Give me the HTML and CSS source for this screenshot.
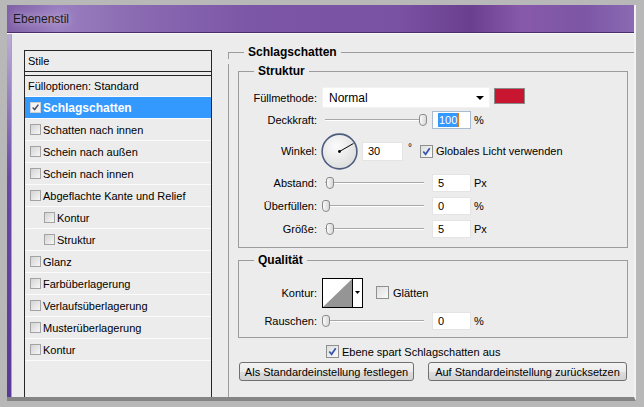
FILE: index.html
```html
<!DOCTYPE html>
<html lang="de">
<head>
  <meta charset="UTF-8">
  <meta name="viewport" content="width=device-width, initial-scale=1.0">
  <title>Ebenenstil</title>
  <link rel="stylesheet" href="styles.css">
</head>
<body>
  <div class="window">
    <div class="titlebar">Ebenenstil</div>

    <div class="dialog">
      <!-- Liste der Stile -->
      <div class="styles-list">
        <div class="list-head">Stile</div>
        <div class="list-item first">Fülloptionen: Standard</div>
        <div class="list-item selected">
          <span class="box checked"><svg viewBox="0 0 11 11"><path d="M2 5.5 L4.5 8 L9 2" /></svg></span>Schlagschatten
        </div>
        <div class="list-item"><span class="box"></span>Schatten nach innen</div>
        <div class="list-item"><span class="box"></span>Schein nach außen</div>
        <div class="list-item"><span class="box"></span>Schein nach innen</div>
        <div class="list-item"><span class="box"></span>Abgeflachte Kante und Relief</div>
        <div class="list-item sub"><span class="box"></span>Kontur</div>
        <div class="list-item sub"><span class="box"></span>Struktur</div>
        <div class="list-item"><span class="box"></span>Glanz</div>
        <div class="list-item"><span class="box"></span>Farbüberlagerung</div>
        <div class="list-item"><span class="box"></span>Verlaufsüberlagerung</div>
        <div class="list-item"><span class="box"></span>Musterüberlagerung</div>
        <div class="list-item"><span class="box"></span>Kontur</div>
      </div>

      <!-- Einstellungen Schlagschatten -->
      <div class="settings">
        <div class="group outer">
          <div class="group-title"><span>Schlagschatten</span></div>
          <div class="group-body">

            <div class="group inner">
              <div class="group-title"><span>Struktur</span></div>
              <div class="group-body struktur">
                <div class="row row-fill">
                  <label>Füllmethode:</label>
                  <div class="select">Normal<span class="arrow"></span></div>
                  <span class="swatch"></span>
                </div>
                <div class="row row-slider">
                  <label>Deckkraft:</label>
                  <div class="slider"><span class="knob" style="left: 98px"></span></div>
                  <div class="field focused"><span class="sel">100</span><span class="caret"></span></div>
                  <span class="unit">%</span>
                </div>
                <div class="row row-angle">
                  <label>Winkel:</label>
                  <svg class="dial" width="37" height="37" viewBox="0 0 37 37">
                    <defs>
                      <radialGradient id="dialfill" cx="40%" cy="35%" r="70%">
                        <stop offset="0" stop-color="#fbfbfb"/>
                        <stop offset="1" stop-color="#dcdcdc"/>
                      </radialGradient>
                    </defs>
                    <circle cx="18.5" cy="18.5" r="17.4" fill="url(#dialfill)" stroke="#4d5d7e" stroke-width="1.6"/>
                    <line x1="18.5" y1="18.5" x2="32.4" y2="10.5" stroke="#000" stroke-width="1"/>
                    <circle cx="18.5" cy="18.5" r="1.4" fill="#000"/>
                  </svg>
                  <div class="field angle">30</div>
                  <span class="deg">°</span>
                  <span class="check on"><svg viewBox="0 0 12 12"><path d="M2.5 6 L5 9 L9.5 2.5" /></svg></span>
                  <span class="check-label">Globales Licht verwenden</span>
                </div>
                <div class="row row-slider">
                  <label>Abstand:</label>
                  <div class="slider"><span class="knob" style="left: 5px"></span></div>
                  <div class="field">5</div>
                  <span class="unit">Px</span>
                </div>
                <div class="row row-slider">
                  <label>Überfüllen:</label>
                  <div class="slider"><span class="knob" style="left: 1px"></span></div>
                  <div class="field">0</div>
                  <span class="unit">%</span>
                </div>
                <div class="row row-slider">
                  <label>Größe:</label>
                  <div class="slider"><span class="knob" style="left: 5px"></span></div>
                  <div class="field">5</div>
                  <span class="unit">Px</span>
                </div>
              </div>
            </div>

            <div class="group inner quality">
              <div class="group-title"><span>Qualität</span></div>
              <div class="group-body qualitaet">
                <div class="row row-contour">
                  <label>Kontur:</label>
                  <svg class="contour" width="41" height="30" viewBox="0 0 41 30">
                    <rect x="0.5" y="0.5" width="40" height="29" fill="#fff" stroke="#000"/>
                    <polygon points="1,29 30,1 30,29" fill="#959595"/>
                    <line x1="30.5" y1="0" x2="30.5" y2="30" stroke="#000"/>
                    <polygon points="33,13 38,13 35.5,16" fill="#000"/>
                  </svg>
                  <span class="check"></span>
                  <span class="check-label">Glätten</span>
                </div>
                <div class="row row-slider">
                  <label>Rauschen:</label>
                  <div class="slider"><span class="knob" style="left: 1px"></span></div>
                  <div class="field">0</div>
                  <span class="unit">%</span>
                </div>
              </div>
            </div>

            <div class="knockout">
              <span class="check on"><svg viewBox="0 0 12 12"><path d="M2.5 6 L5 9 L9.5 2.5" /></svg></span>
              <span class="check-label">Ebene spart Schlagschatten aus</span>
            </div>

            <div class="buttons">
              <button class="btn-save">Als Standardeinstellung festlegen</button>
              <button class="btn-reset">Auf Standardeinstellung zurücksetzen</button>
            </div>

          </div>
        </div>
      </div>
    </div>
  </div>
</body>
</html>
```

FILE: styles.css
```css
html {
  background: #b8b8b8;
}
body {
  margin: 0;
  font-family: "Liberation Sans", Arial, sans-serif;
  font-size: 11px;
  color: #000;
}
.window {
  margin: 5px 0 0 7px;
  width: 627px;
  height: 392px;
  display: flex;
  flex-direction: column;
  border-right: 2px solid #f2f2f2;
  border-bottom: 4px solid #858585;
  overflow: hidden;
}
.titlebar {
  height: 27px;
  line-height: 29px;
  padding-left: 6px;
  font-size: 12px;
  color: #1b1b1b;
  text-shadow: 0 0 8px rgba(235, 225, 245, 0.9);
  border-bottom: 1px solid #4b2d6e;
  background: linear-gradient(90deg, #7f5fa6 0%, #9a7fc0 8%, #8b6bb2 20%, #7b55a6 40%, #7a52a4 62%, #6b3f8f 74%, #8759ab 82%, #7d56a6 92%, #8a6ab2 100%);
}
.dialog {
  flex: 1;
  display: flex;
  min-height: 0;
  padding-left: 17px;
  background:
    linear-gradient(#bcaed6, #6a48a6 40%, #5a3898) left top / 4px 100% no-repeat,
    linear-gradient(#a6a6a6, #a6a6a6) 4px 0 / 1px 100% no-repeat,
    #ececec;
  box-shadow: inset 0 1px #f8f8f8;
}

/* Liste links */
.styles-list {
  width: 186px;
  margin-top: 17px;
  border: 1px solid #262626;
  border-bottom: none;
}
.list-head {
  height: 20px;
  line-height: 20px;
  padding-left: 3px;
  border-bottom: 1px solid #262626;
}
.list-item {
  height: 21px;
  display: flex;
  align-items: center;
  padding-left: 5px;
  border-bottom: 1px solid #fbfbfb;
}
.list-item.first {
  height: 20px;
  margin-top: 3px;
  padding-left: 3px;
  border-top: 1px solid #262626;
}
.list-item.sub {
  padding-left: 19px;
}
.list-item.selected {
  background-color: #3399ff;
  color: #fff;
  font-weight: bold;
  font-size: 12px;
}
.box {
  width: 9px;
  height: 9px;
  margin-right: 2px;
  border: 1px solid #a3a3a3;
  background: linear-gradient(135deg, #d4d4d4, #f6f6f6);
  flex-shrink: 0;
}
.box.checked {
  background: #f4f4f4;
  border-color: #d0d0d0;
}
.box svg {
  display: block;
  width: 9px;
  height: 9px;
}
.box svg path {
  fill: none;
  stroke: #4b4b66;
  stroke-width: 1.8;
}

/* Einstellungen rechts */
.settings {
  flex: 1;
  margin-left: 16px;
  margin-top: 12px;
}
.group-title {
  display: flex;
  height: 14px;
  font-weight: bold;
  font-size: 12px;
  line-height: 14px;
}
.group-title span {
  padding: 0 4px;
}
.group-title::before,
.group-title::after {
  content: "";
  align-self: flex-end;
  height: 7px;
  box-sizing: border-box;
  border-top: 1px solid #9c9c9c;
}
.group-title::before {
  width: 16px;
  border-left: 1px solid #9c9c9c;
}
.group-title::after {
  flex: 1;
  border-right: 1px solid #9c9c9c;
}
.group-body {
  border: 1px solid #9c9c9c;
  border-top: none;
}
.outer {
  height: 100%;
}
.outer > .group-title::after {
  border-right: none;
}
.outer > .group-body {
  height: 100%;
  border-right: none;
  border-bottom: none;
  padding: 0 6px 0 9px;
}
.inner {
  margin-top: 5px;
}
.struktur {
  padding: 9px 0 7px;
}
.qualitaet {
  padding: 9px 0 5px;
}

.row {
  display: flex;
  align-items: center;
}
.row label {
  width: 78px;
  margin-right: 4px;
  text-align: right;
  flex-shrink: 0;
}
.row-fill {
  height: 22px;
  align-items: flex-start;
}
.row-fill label {
  line-height: 22px;
}
.row-slider {
  height: 23px;
}
.struktur .row-slider:nth-child(2) {
  height: 22px;
}
.row-angle {
  height: 40px;
}
.row-contour {
  height: 33px;
}

.select {
  display: flex;
  align-items: center;
  width: 160px;
  height: 19px;
  margin-left: 1px;
  padding-left: 6px;
  font-size: 12px;
  background: #fff;
  border: 1px solid #f2f2f2;
}
.arrow {
  margin-left: auto;
  margin-right: 5px;
  border-left: 4px solid transparent;
  border-right: 4px solid transparent;
  border-top: 4px solid #000;
}
.swatch {
  width: 29px;
  height: 14px;
  margin: 1px 0 0 4px;
  background-color: #c81530;
  border: 1px solid #8a8a8a;
}

.slider {
  position: relative;
  width: 106px;
  height: 14px;
  margin-right: 5px;
}
.slider::before {
  content: "";
  position: absolute;
  left: 4px;
  right: 3px;
  top: 6px;
  border-top: 1px solid #a8a8a8;
  border-bottom: 1px solid #fff;
}
.knob {
  position: absolute;
  top: 1px;
  width: 6px;
  height: 10px;
  border: 1px solid #8a8a8a;
  border-radius: 3px 3px 4px 4px;
  background: linear-gradient(90deg, #fafafa, #d8d8d8);
}

.field {
  width: 32px;
  height: 16px;
  line-height: 16px;
  padding-left: 5px;
  background: #fff;
  border: 1px solid #e4e4e4;
}
.field.focused {
  display: flex;
  align-items: center;
  border-color: #a9bbd0;
}
.field .sel {
  background-color: #3399ff;
  color: #fff;
  line-height: 14px;
  padding: 0 1px;
}
.caret {
  width: 1px;
  height: 14px;
  background: #e07b1a;
}
.field.angle {
  width: 34px;
  height: 17px;
  line-height: 17px;
  margin-left: 4px;
}
.unit {
  margin-left: 3px;
}
.deg {
  margin-left: 5px;
  align-self: flex-start;
  margin-top: 11px;
  font-size: 10px;
}

.check {
  width: 11px;
  height: 11px;
  border: 1px solid #8e8f8f;
  background: linear-gradient(135deg, #dedede, #fafafa);
  flex-shrink: 0;
}
.check svg {
  display: block;
  width: 11px;
  height: 11px;
}
.check svg path {
  fill: none;
  stroke: #3455a8;
  stroke-width: 1.9;
}
.check-label {
  margin-left: 3px;
}
.row-angle .check {
  margin-left: 8px;
}
.contour {
  margin-left: 1px;
}
.row-contour .check {
  margin-left: 13px;
}
.row-contour .check-label {
  margin-left: 4px;
}

.knockout {
  display: flex;
  align-items: center;
  height: 19px;
  margin-top: 4px;
  padding-left: 88px;
}
.buttons {
  display: flex;
  margin-top: 1px;
}
.buttons button {
  height: 19px;
  padding: 0;
  font-family: "Liberation Sans", Arial, sans-serif;
  font-size: 11px;
  color: #000;
  border: 1px solid #707070;
  border-radius: 3px;
  background: linear-gradient(#f3f3f3, #ebebeb 50%, #dddddd 51%, #d2d2d2);
}
.btn-save {
  width: 175px;
  margin-left: 1px;
}
.btn-reset {
  width: 199px;
  margin-left: 14px;
}
```
